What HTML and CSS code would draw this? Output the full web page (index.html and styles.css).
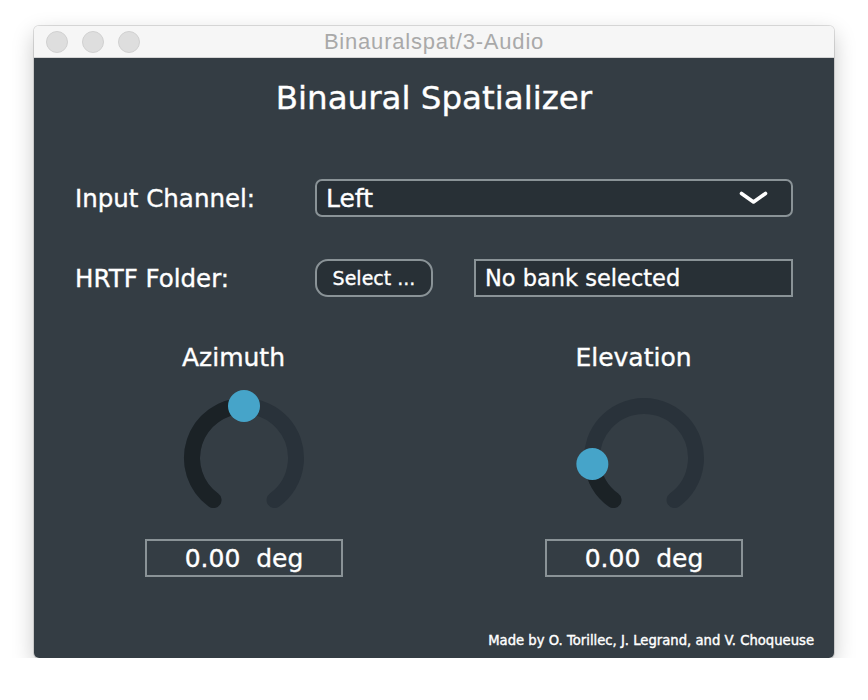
FILE: index.html
```html
<!DOCTYPE html>
<html>
<head>
<meta charset="utf-8">
<link rel="stylesheet" href="styles.css">
</head>
<body>
<div class="window">
  <div class="titlebar">
    <div class="lights"><span class="light"></span><span class="light"></span><span class="light"></span></div>
    <div class="title">Binauralspat/3-Audio</div>
    <div></div>
  </div>
  <div class="panel">
    <h1 class="heading">Binaural Spatializer</h1>
    <div class="row row-input">
      <div class="label">Input Channel:</div>
      <div class="combo">
        <span class="combo-text">Left</span>
        <svg class="chevron" width="29" height="14" viewBox="0 0 29 14"><polyline points="2.5,2.5 14.5,11 26.5,2.5" fill="none" stroke="#fff" stroke-width="3.6" stroke-linecap="round" stroke-linejoin="round"/></svg>
      </div>
    </div>
    <div class="row row-hrtf">
      <div class="label">HRTF Folder:</div>
      <div class="hrtf-controls">
        <button class="select-btn">Select ...</button>
        <div class="bank-box">No bank selected</div>
      </div>
    </div>
    <div class="knobs">
      <div class="knob-col">
        <div class="knob-label">Azimuth</div>
        <svg class="knob" width="136" height="136" viewBox="0 0 136 136">
          <path d="M37.44 110.07 A52 52 0 1 1 98.56 110.07" fill="none" stroke="#29323a" stroke-width="16" stroke-linecap="round"/>
          <path d="M37.44 110.07 A52 52 0 0 1 68 16" fill="none" stroke="#1b2226" stroke-width="16" stroke-linecap="round"/>
          <circle cx="68" cy="16" r="16" fill="#46a4c9"/>
        </svg>
        <div class="value-box">0.00  deg</div>
      </div>
      <div class="knob-col">
        <div class="knob-label">Elevation</div>
        <svg class="knob" width="136" height="136" viewBox="0 0 136 136">
          <path d="M37.44 110.07 A52 52 0 1 1 98.56 110.07" fill="none" stroke="#29323a" stroke-width="16" stroke-linecap="round"/>
          <path d="M37.44 110.07 A52 52 0 0 1 16.35 73.97" fill="none" stroke="#1b2226" stroke-width="16" stroke-linecap="round"/>
          <circle cx="16.35" cy="73.97" r="16" fill="#46a4c9"/>
        </svg>
        <div class="value-box">0.00  deg</div>
      </div>
    </div>
    <div class="footer">Made by O. Torillec, J. Legrand, and V. Choqueuse</div>
  </div>
</div>
</body>
</html>
```
FILE: styles.css
```css
body {
  margin: 0;
  background: #ffffff;
  font-family: "DejaVu Sans", "Liberation Sans", sans-serif;
}

.window {
  margin: 26px 0 0 34px;
  width: 800px;
  border-radius: 5px;
  overflow: hidden;
  box-shadow: 0 8px 22px rgba(0, 0, 0, 0.22), 0 0 0 1px rgba(0, 0, 0, 0.12);
}

.titlebar {
  height: 31px;
  background: #f6f6f6;
  border-bottom: 1px solid #d4d4d4;
  display: grid;
  grid-template-columns: 1fr auto 1fr;
  align-items: center;
}

.lights {
  display: flex;
  gap: 14px;
  padding-left: 12px;
}

.light {
  width: 20px;
  height: 20px;
  border-radius: 50%;
  background: #dedede;
  border: 1px solid #d0d0d0;
}

.title {
  font-family: "Liberation Sans", sans-serif;
  font-size: 22px;
  color: #a9a9a9;
  letter-spacing: 0.8px;
}

.panel {
  height: 600px;
  box-sizing: border-box;
  background: #343d44;
  color: #ffffff;
  display: flex;
  flex-direction: column;
  padding: 20px 41px 0;
  -webkit-text-stroke: 0.35px #ffffff;
}

.heading {
  margin: 0;
  font-size: 32.5px;
  font-weight: normal;
  line-height: 40px;
  text-align: center;
}

.row {
  display: grid;
  grid-template-columns: 240px 1fr;
  align-items: center;
  height: 38px;
}

.row-input { margin-top: 61px; }
.row-hrtf { margin-top: 42px; }

.label {
  font-size: 24.5px;
}

.combo {
  height: 38px;
  box-sizing: border-box;
  border: 2px solid #8a9397;
  border-radius: 7px;
  background: #283036;
  display: flex;
  align-items: center;
  justify-content: space-between;
  padding: 0 23px 0 9px;
  font-size: 25px;
}

.chevron { display: block; }

.hrtf-controls {
  display: flex;
  gap: 41px;
}

.select-btn {
  width: 118px;
  height: 38px;
  box-sizing: border-box;
  border: 2px solid #8a9397;
  border-radius: 13px;
  background: #283036;
  color: #ffffff;
  -webkit-text-stroke: 0.35px #ffffff;
  font-family: "DejaVu Sans", sans-serif;
  font-size: 19px;
  padding: 0;
}

.bank-box {
  flex: 1;
  height: 38px;
  box-sizing: border-box;
  border: 2px solid #8a9397;
  background: #283036;
  font-size: 22.5px;
  display: flex;
  align-items: center;
  padding-left: 9px;
}

.knobs {
  display: flex;
  gap: 202px;
  padding-left: 70px;
  margin-top: 46px;
}

.knob-col {
  width: 198px;
  display: flex;
  flex-direction: column;
  align-items: center;
}

.knob-label {
  font-size: 25px;
  line-height: 30px;
  padding-right: 21px;
}

.knob {
  display: block;
  margin-top: 17px;
}

.value-box {
  margin-top: 13px;
  width: 198px;
  height: 38px;
  box-sizing: border-box;
  border: 2px solid #8a9397;
  font-size: 25px;
  display: flex;
  align-items: center;
  justify-content: center;
  white-space: pre;
}

.footer {
  margin-top: auto;
  align-self: flex-end;
  margin-right: -21px;
  padding-bottom: 10px;
  font-size: 13.2px;
  -webkit-text-stroke: 0.4px #ffffff;
}
```
